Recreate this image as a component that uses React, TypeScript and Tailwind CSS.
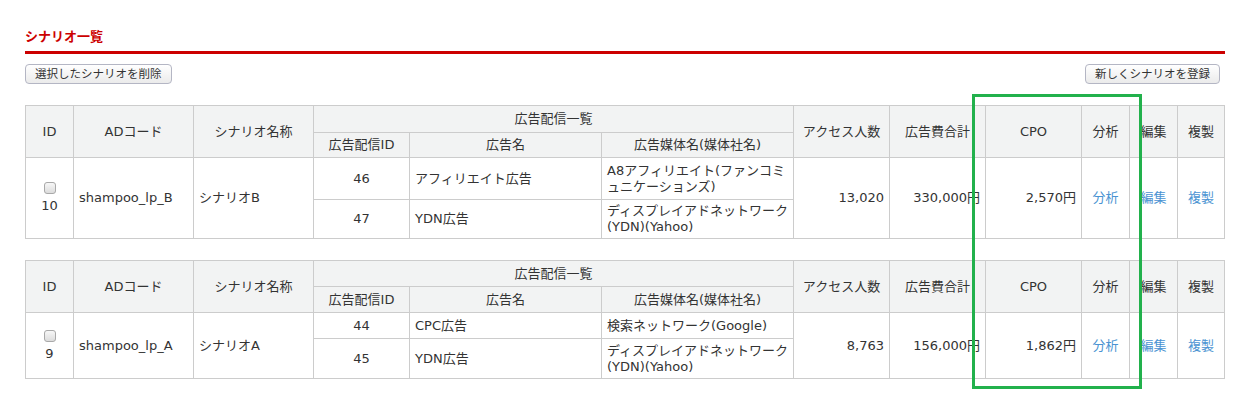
import React from "react";

type Ad = { id: string; name: string; media: string[] };
type Scenario = {
  id: string;
  code: string;
  name: string;
  ads: Ad[];
  access: string;
  cost: string;
  cpo: string;
  heights: string[];
};

const scenarios: Scenario[] = [
  {
    id: "10",
    code: "shampoo_lp_B",
    name: "シナリオB",
    ads: [
      { id: "46", name: "アフィリエイト広告", media: ["A8アフィリエイト(ファンコミ", "ュニケーションズ)"] },
      { id: "47", name: "YDN広告", media: ["ディスプレイアドネットワーク", "(YDN)(Yahoo)"] },
    ],
    access: "13,020",
    cost: "330,000円",
    cpo: "2,570円",
    heights: ["h-[27px]", "h-[25px]", "h-[42px]", "h-[39px]"],
  },
  {
    id: "9",
    code: "shampoo_lp_A",
    name: "シナリオA",
    ads: [
      { id: "44", name: "CPC広告", media: ["検索ネットワーク(Google)"] },
      { id: "45", name: "YDN広告", media: ["ディスプレイアドネットワーク", "(YDN)(Yahoo)"] },
    ],
    access: "8,763",
    cost: "156,000円",
    cpo: "1,862円",
    heights: ["h-[26px]", "h-[26px]", "h-[26px]", "h-[40px]"],
  },
];

const th = "border border-[#cccccc] font-normal text-center align-middle px-[5px]";
const td = "border border-[#cccccc] align-middle px-[5px]";
const link = "text-[#4a93d2]";

function Button({ label }: { label: string }) {
  return (
    <button className="h-[20px] px-[9px] rounded-[4px] border border-[#b4b6c4] bg-gradient-to-b from-white to-[#ebebeb] text-[11.5px] leading-[18px] text-[#333]">
      {label}
    </button>
  );
}

function ScenarioTable({ s }: { s: Scenario }) {
  const [a, b] = s.ads;
  return (
    <table className="w-[1199px] table-fixed border-collapse text-[13px] leading-[16px] text-[#333]">
      <colgroup>
        <col className="w-[48px]" />
        <col className="w-[120px]" />
        <col className="w-[120px]" />
        <col className="w-[96px]" />
        <col className="w-[192px]" />
        <col className="w-[192px]" />
        <col className="w-[96px]" />
        <col className="w-[96px]" />
        <col className="w-[96px]" />
        <col className="w-[48px]" />
        <col className="w-[48px]" />
        <col className="w-[47px]" />
      </colgroup>
      <thead className="bg-[#f2f3f3]">
        <tr className={s.heights[0]}>
          <th rowSpan={2} className={th}>ID</th>
          <th rowSpan={2} className={th}>ADコード</th>
          <th rowSpan={2} className={th}>シナリオ名称</th>
          <th colSpan={3} className={th}>広告配信一覧</th>
          <th rowSpan={2} className={`${th} whitespace-nowrap px-0`}>アクセス人数</th>
          <th rowSpan={2} className={th}>広告費合計</th>
          <th rowSpan={2} className={th}>CPO</th>
          <th rowSpan={2} className={th}>分析</th>
          <th rowSpan={2} className={th}>編集</th>
          <th rowSpan={2} className={th}>複製</th>
        </tr>
        <tr className={s.heights[1]}>
          <th className={th}>広告配信ID</th>
          <th className={th}>広告名</th>
          <th className={`${th} whitespace-nowrap`}>広告媒体名(媒体社名)</th>
        </tr>
      </thead>
      <tbody>
        <tr className={s.heights[2]}>
          <td rowSpan={2} className={`${td} text-center`}>
            <div className="flex flex-col items-center">
              <span className="block w-[12px] h-[12px] rounded-[3px] border border-[#a9a9a9] bg-gradient-to-b from-[#f7f7f7] to-[#dcdcdc]" />
              <span className="mt-[4px]">{s.id}</span>
            </div>
          </td>
          <td rowSpan={2} className={td}>{s.code}</td>
          <td rowSpan={2} className={td}>{s.name}</td>
          <td className={`${td} text-center`}>{a.id}</td>
          <td className={td}>{a.name}</td>
          <td className={`${td} whitespace-nowrap`}>
            {a.media.map((m) => (
              <div key={m}>{m}</div>
            ))}
          </td>
          <td rowSpan={2} className={`${td} text-right`}>{s.access}</td>
          <td rowSpan={2} className={`${td} text-right`}>{s.cost}</td>
          <td rowSpan={2} className={`${td} text-right`}>{s.cpo}</td>
          <td rowSpan={2} className={`${td} text-center ${link}`}>分析</td>
          <td rowSpan={2} className={`${td} text-center ${link}`}>編集</td>
          <td rowSpan={2} className={`${td} text-center ${link}`}>複製</td>
        </tr>
        <tr className={s.heights[3]}>
          <td className={`${td} text-center`}>{b.id}</td>
          <td className={td}>{b.name}</td>
          <td className={`${td} whitespace-nowrap`}>
            {b.media.map((m) => (
              <div key={m}>{m}</div>
            ))}
          </td>
        </tr>
      </tbody>
    </table>
  );
}

export default function App() {
  return (
    <main
      className="relative w-[1254px] h-[409px] bg-white pl-[25px] pt-[29px]"
      style={{ fontFamily: '"DejaVu Sans", "Noto Sans CJK JP", sans-serif' }}
    >
      <div className="w-[1200px] border-b-[3px] border-[#cc0000] pb-[6px]">
        <h2 className="text-[13px] leading-[16px] font-bold text-[#cc0000]">シナリオ一覧</h2>
      </div>

      <div className="w-[1195px] mt-[10px] flex justify-between">
        <Button label="選択したシナリオを削除" />
        <Button label="新しくシナリオを登録" />
      </div>

      <div className="mt-[21px] flex flex-col gap-[21px]">
        {scenarios.map((s) => (
          <ScenarioTable key={s.id} s={s} />
        ))}
      </div>

      {/* 注目箇所の枠 */}
      <div className="absolute left-[972px] top-[94px] w-[170px] h-[295px] border-[3px] border-[#22b14c] pointer-events-none" />
    </main>
  );
}
